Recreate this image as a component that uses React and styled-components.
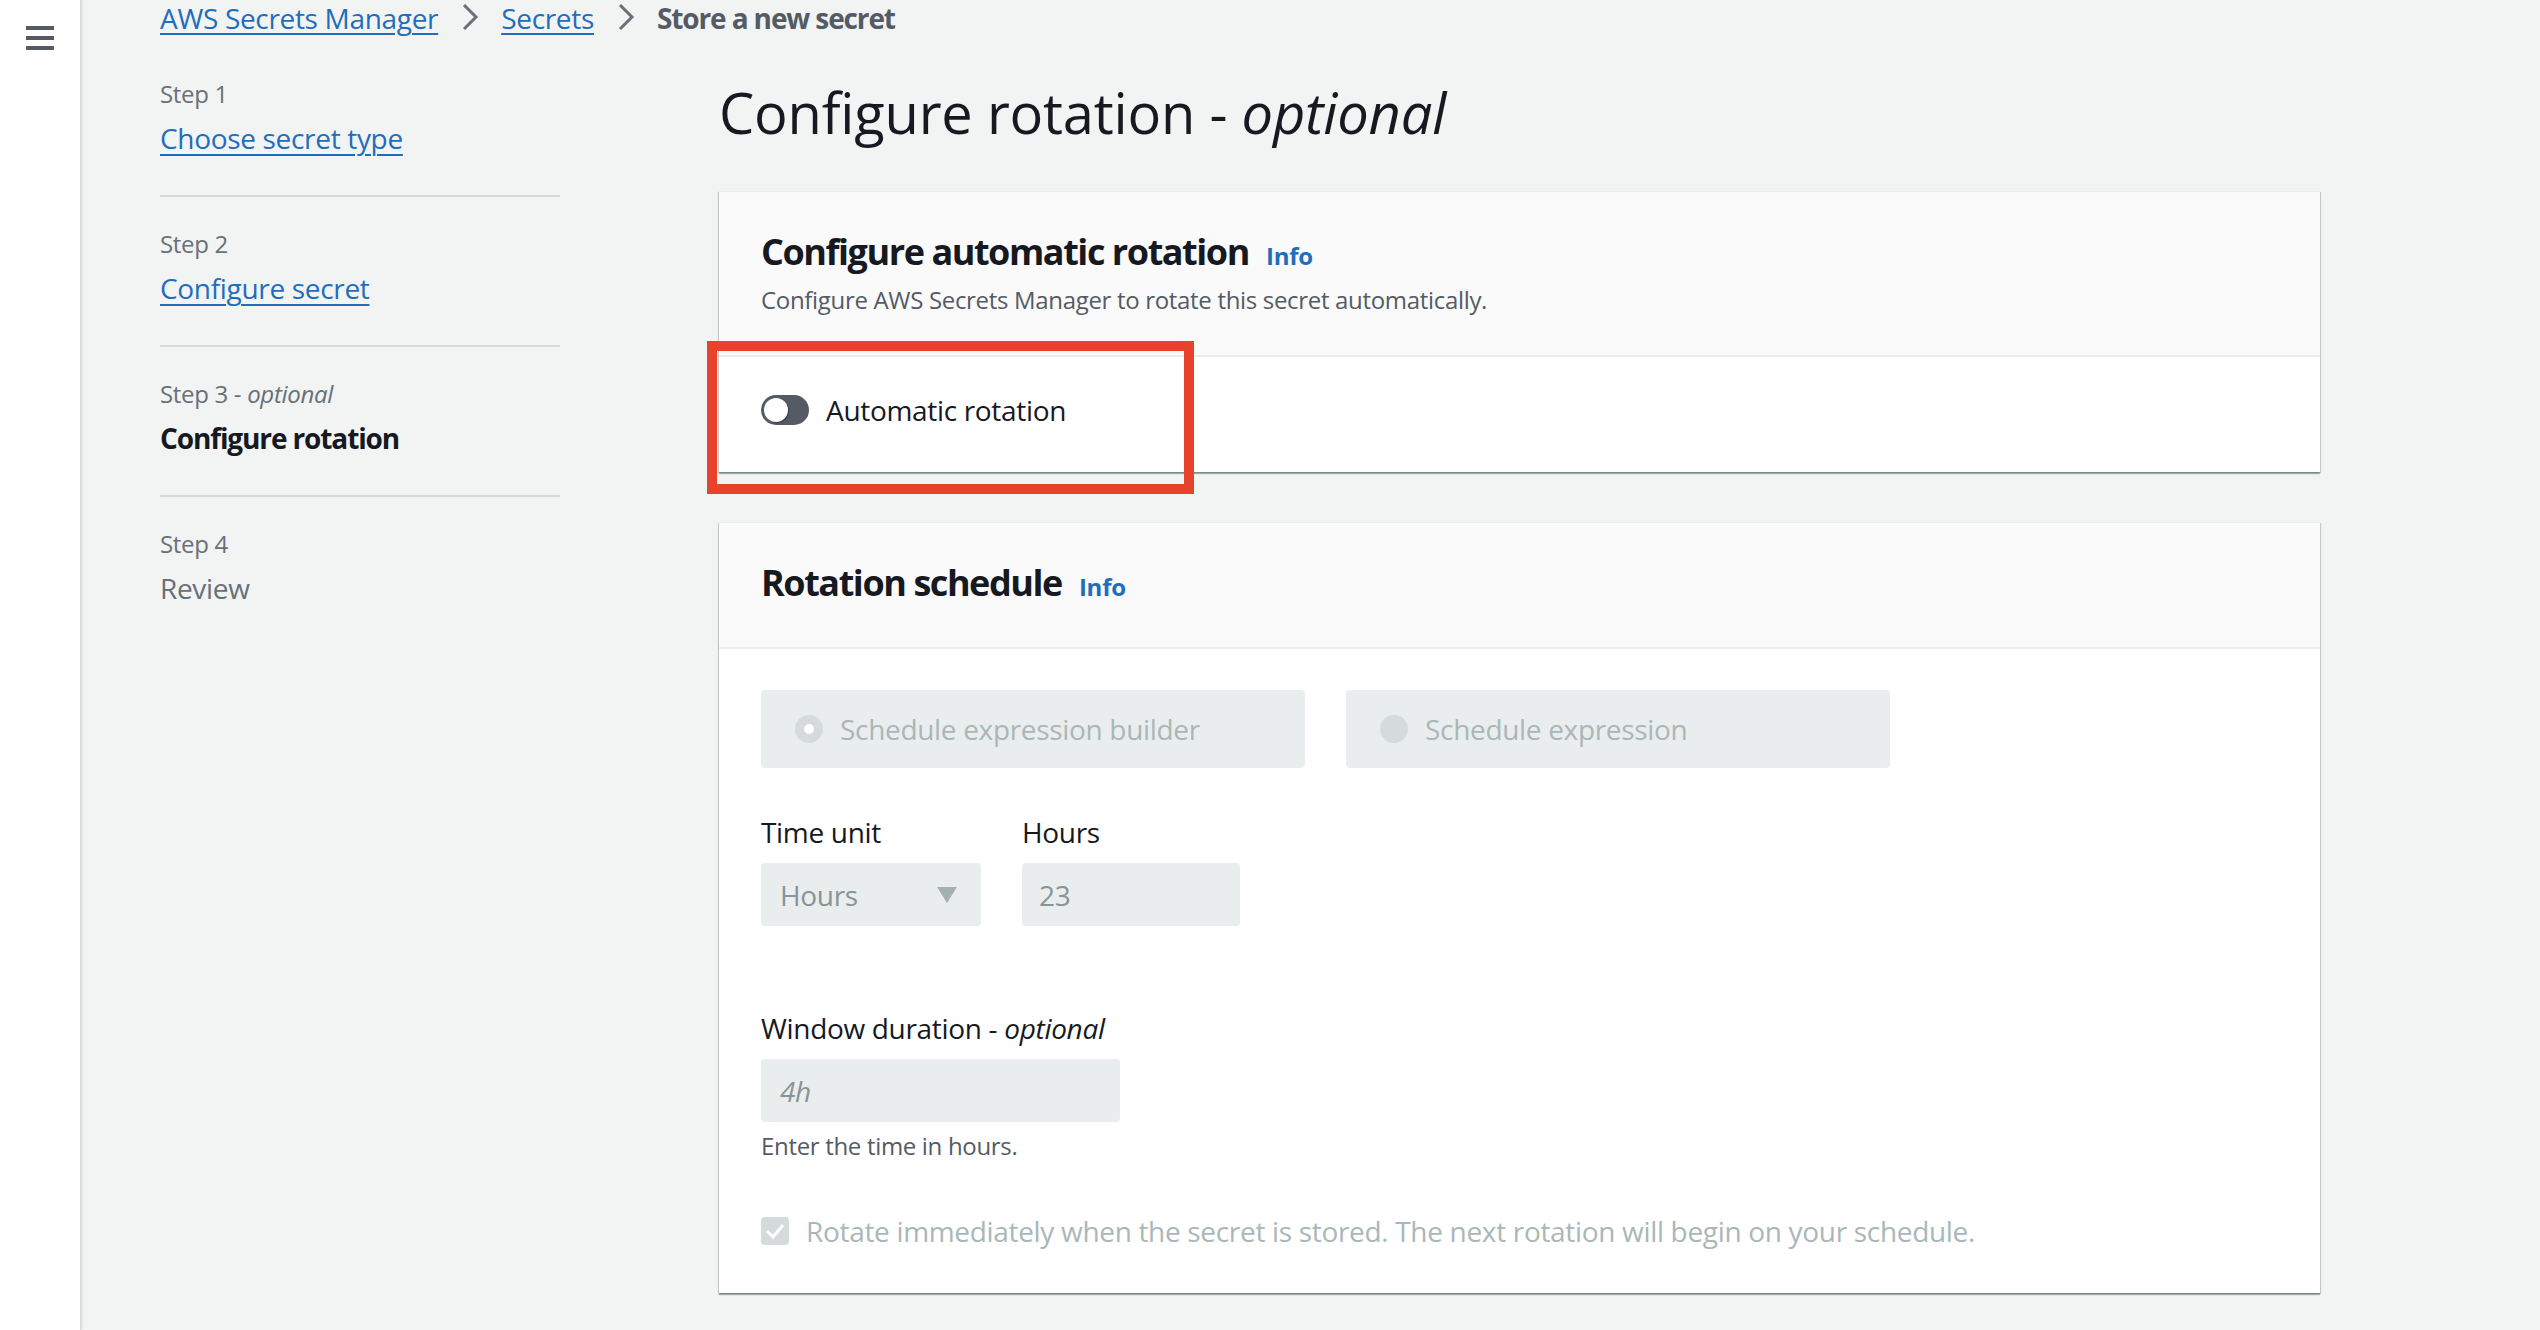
import React from "react";
import styled, { createGlobalStyle } from "styled-components";

const GlobalStyle = createGlobalStyle`
  html, body {
    margin: 0;
    padding: 0;
    background: #f2f3f3;
  }
  body {
    font-family: "Open Sans", "Noto Sans", sans-serif;
    color: #16191f;
    letter-spacing: -0.32px;
    -webkit-font-smoothing: antialiased;
  }
  * { box-sizing: border-box; }
`;

const LINK = "#1f6ebd";
const BOLD_SPACING = "-0.04em";

const Shell = styled.div`
  display: flex;
  width: 100%;
  height: 100vh;
  overflow: hidden;
`;

const SideNav = styled.nav`
  flex: 0 0 81px;
  background: #fff;
  border-right: 1px solid #d5dbdb;
  box-shadow: 1px 0 2px rgba(0, 28, 36, 0.12);
  display: flex;
  justify-content: center;
  padding-top: 26px;
`;

const Hamburger = styled.div`
  width: 28px;
  height: 24px;
  display: flex;
  flex-direction: column;
  justify-content: space-between;
  span {
    display: block;
    height: 4px;
    background: #545b64;
  }
`;

const Main = styled.main`
  flex: 1;
  padding-left: 79px;
`;

const Breadcrumbs = styled.div`
  display: flex;
  align-items: flex-start;
  height: 32px;
  font-size: 28px;
  line-height: 36px;
`;

const Crumb = styled.a`
  color: ${LINK};
  text-decoration: underline;
  text-decoration-thickness: 2px;
  text-underline-offset: 4px;
`;

const CrumbCurrent = styled.span`
  color: #545b64;
  font-weight: 700;
  letter-spacing: ${BOLD_SPACING};
`;

const Sep = styled.svg`
  width: 20px;
  height: 28px;
  margin: 3px 21px 0 22px;
  flex: none;
`;

const Layout = styled.div`
  display: grid;
  grid-template-columns: 400px 1601px;
  column-gap: 159px;
  margin-top: 46px;
  align-items: start;
`;

const Steps = styled.ol`
  list-style: none;
  margin: 0;
  padding: 0;
`;

const Step = styled.li`
  display: flex;
  flex-direction: column;
  gap: 8px;
  padding: 31px 0 37px;
  border-bottom: 2px solid #d5dbdb;
  &:first-child { padding-top: 0; }
  &:last-child { border-bottom: none; }
`;

const StepLabel = styled.div`
  font-size: 24px;
  line-height: 32px;
  color: #687078;
  em { font-style: italic; }
`;

const StepLink = styled.a`
  align-self: flex-start;
  font-size: 28px;
  line-height: 40px;
  color: ${LINK};
  text-decoration: underline;
  text-decoration-thickness: 2px;
  text-underline-offset: 5px;
`;

const StepName = styled.div`
  font-size: 28px;
  line-height: 40px;
  color: ${(p) => (p.$current ? "#16191f" : "#687078")};
  font-weight: ${(p) => (p.$current ? 700 : 400)};
  letter-spacing: ${(p) => (p.$current ? BOLD_SPACING : "inherit")};
`;

const Content = styled.div`
  display: flex;
  flex-direction: column;
`;

const PageTitle = styled.h1`
  margin: 2px 0 47px;
  font-size: 56px;
  line-height: 64px;
  font-weight: 400;
  letter-spacing: -0.2px;
  color: #16191f;
  em { font-style: italic; }
`;

const Card = styled.section`
  position: relative;
  background: #fff;
  border-top: 1px solid #eaeded;
  box-shadow: 0 2px 1px 0 rgba(0, 28, 36, 0.3),
    1px 1px 1px 0 rgba(0, 28, 36, 0.15),
    -1px 1px 1px 0 rgba(0, 28, 36, 0.15);
  margin-bottom: ${(p) => p.$gap || 0}px;
`;

const CardHeader = styled.header`
  background: #fafafa;
  border-bottom: 2px solid #eaeded;
  padding: 38px 40px ${(p) => p.$pb}px 42px;
`;

const CardTitle = styled.h2`
  margin: 0;
  display: flex;
  align-items: baseline;
  font-size: 36px;
  line-height: 44px;
  font-weight: 700;
  letter-spacing: ${BOLD_SPACING};
  color: #16191f;
`;

const InfoLink = styled.a`
  margin-left: 17px;
  font-size: 24px;
  font-weight: 700;
  color: ${LINK};
  letter-spacing: -0.01em;
`;

const CardDescription = styled.p`
  margin: 6px 0 0;
  font-size: 24px;
  line-height: 32px;
  color: #545b64;
`;

const CardBody = styled.div`
  position: relative;
  padding: ${(p) => p.$pad};
`;

const Highlight = styled.div`
  position: absolute;
  left: -12px;
  top: -16px;
  width: 487px;
  height: 153px;
  border: 10px solid #e8412c;
  pointer-events: none;
`;

const ToggleRow = styled.label`
  display: flex;
  align-items: center;
  gap: 17px;
  font-size: 28px;
  line-height: 40px;
  color: #16191f;
`;

const ToggleTrack = styled.span`
  position: relative;
  width: 48px;
  height: 30px;
  border-radius: 15px;
  background: #545b64;
  flex: none;
`;

const ToggleKnob = styled.span`
  position: absolute;
  left: 3px;
  top: 3px;
  width: 24px;
  height: 24px;
  border-radius: 50%;
  background: #fff;
  box-shadow: 1px 1px 1px rgba(0, 0, 0, 0.35);
`;

const Tiles = styled.div`
  display: grid;
  grid-template-columns: 544px 544px;
  column-gap: 41px;
`;

const Tile = styled.div`
  height: 78px;
  background: #eaeded;
  border-radius: 4px;
  display: flex;
  align-items: center;
  gap: 17px;
  padding-left: 34px;
  font-size: 28px;
  color: #aab7b8;
`;

const Radio = styled.span`
  width: 28px;
  height: 28px;
  border-radius: 50%;
  background: #d5dbdb;
  display: flex;
  align-items: center;
  justify-content: center;
  flex: none;
  &::after {
    content: "";
    width: 10px;
    height: 10px;
    border-radius: 50%;
    background: ${(p) => (p.$checked ? "#fff" : "transparent")};
  }
`;

const FieldRow = styled.div`
  display: flex;
  gap: 41px;
  margin-top: ${(p) => p.$mt || 0}px;
`;

const Field = styled.div`
  display: flex;
  flex-direction: column;
  gap: 11px;
  width: ${(p) => p.$w}px;
`;

const FieldLabel = styled.div`
  font-size: 28px;
  line-height: 40px;
  color: #16191f;
  white-space: nowrap;
  em { font-style: italic; }
`;

const Control = styled.div`
  height: 63px;
  background: #eaeded;
  border-radius: 4px;
  display: flex;
  align-items: center;
  justify-content: space-between;
  padding: 0 24px 0 ${(p) => p.$pl || 18}px;
  font-size: 28px;
  color: #879596;
  font-style: ${(p) => (p.$italic ? "italic" : "normal")};
`;

const Caret = styled.svg`
  width: 20px;
  height: 16px;
`;

const HelpText = styled.div`
  margin-top: -3px;
  font-size: 24px;
  line-height: 32px;
  color: #545b64;
`;

const CheckRow = styled.label`
  display: flex;
  align-items: center;
  gap: 17px;
  margin-top: 49px;
  font-size: 28px;
  line-height: 40px;
  color: #aab7b8;
`;

const CheckBox = styled.span`
  width: 28px;
  height: 28px;
  border-radius: 4px;
  background: #d5dbdb;
  display: flex;
  align-items: center;
  justify-content: center;
  flex: none;
`;

const Chevron = () => (
  <Sep viewBox="0 0 20 28" fill="none">
    <path d="M4 2 L16 14 L4 26" stroke="#687078" strokeWidth="3" strokeLinejoin="miter" />
  </Sep>
);

export default function App() {
  return (
    <>
      <GlobalStyle />
      <Shell>
        <SideNav>
          <Hamburger>
            <span />
            <span />
            <span />
          </Hamburger>
        </SideNav>
        <Main>
          <Breadcrumbs>
            <Crumb>AWS Secrets Manager</Crumb>
            <Chevron />
            <Crumb>Secrets</Crumb>
            <Chevron />
            <CrumbCurrent>Store a new secret</CrumbCurrent>
          </Breadcrumbs>

          <Layout>
            <Steps>
              <Step>
                <StepLabel>Step 1</StepLabel>
                <StepLink>Choose secret type</StepLink>
              </Step>
              <Step>
                <StepLabel>Step 2</StepLabel>
                <StepLink>Configure secret</StepLink>
              </Step>
              <Step>
                <StepLabel>
                  Step 3 - <em>optional</em>
                </StepLabel>
                <StepName $current>Configure rotation</StepName>
              </Step>
              <Step>
                <StepLabel>Step 4</StepLabel>
                <StepName>Review</StepName>
              </Step>
            </Steps>

            <Content>
              <PageTitle>
                Configure rotation - <em>optional</em>
              </PageTitle>

              <Card $gap={50}>
                <CardHeader $pb={39}>
                  <CardTitle>
                    Configure automatic rotation
                    <InfoLink>Info</InfoLink>
                  </CardTitle>
                  <CardDescription>
                    Configure AWS Secrets Manager to rotate this secret automatically.
                  </CardDescription>
                </CardHeader>
                <CardBody $pad="33px 42px 42px">
                  <ToggleRow>
                    <ToggleTrack>
                      <ToggleKnob />
                    </ToggleTrack>
                    Automatic rotation
                  </ToggleRow>
                  <Highlight />
                </CardBody>
              </Card>

              <Card>
                <CardHeader $pb={38}>
                  <CardTitle>
                    Rotation schedule
                    <InfoLink>Info</InfoLink>
                  </CardTitle>
                </CardHeader>
                <CardBody $pad="41px 42px 42px">
                  <Tiles>
                    <Tile>
                      <Radio $checked />
                      Schedule expression builder
                    </Tile>
                    <Tile>
                      <Radio />
                      Schedule expression
                    </Tile>
                  </Tiles>

                  <FieldRow $mt={44}>
                    <Field $w={220}>
                      <FieldLabel>Time unit</FieldLabel>
                      <Control $pl={19}>
                        Hours
                        <Caret viewBox="0 0 20 16">
                          <path d="M0 0 H20 L10 16 Z" fill="#a4b0b1" />
                        </Caret>
                      </Control>
                    </Field>
                    <Field $w={218}>
                      <FieldLabel>Hours</FieldLabel>
                      <Control $pl={17}>23</Control>
                    </Field>
                  </FieldRow>

                  <FieldRow $mt={82}>
                    <Field $w={359}>
                      <FieldLabel>
                        Window duration - <em>optional</em>
                      </FieldLabel>
                      <Control $pl={19} $italic>4h</Control>
                      <HelpText>Enter the time in hours.</HelpText>
                    </Field>
                  </FieldRow>

                  <CheckRow>
                    <CheckBox>
                      <svg width="20" height="16" viewBox="0 0 20 16" fill="none">
                        <path d="M2 8 L8 14 L18 2" stroke="#fff" strokeWidth="3" />
                      </svg>
                    </CheckBox>
                    Rotate immediately when the secret is stored. The next rotation will begin on your schedule.
                  </CheckRow>
                </CardBody>
              </Card>
            </Content>
          </Layout>
        </Main>
      </Shell>
    </>
  );
}
